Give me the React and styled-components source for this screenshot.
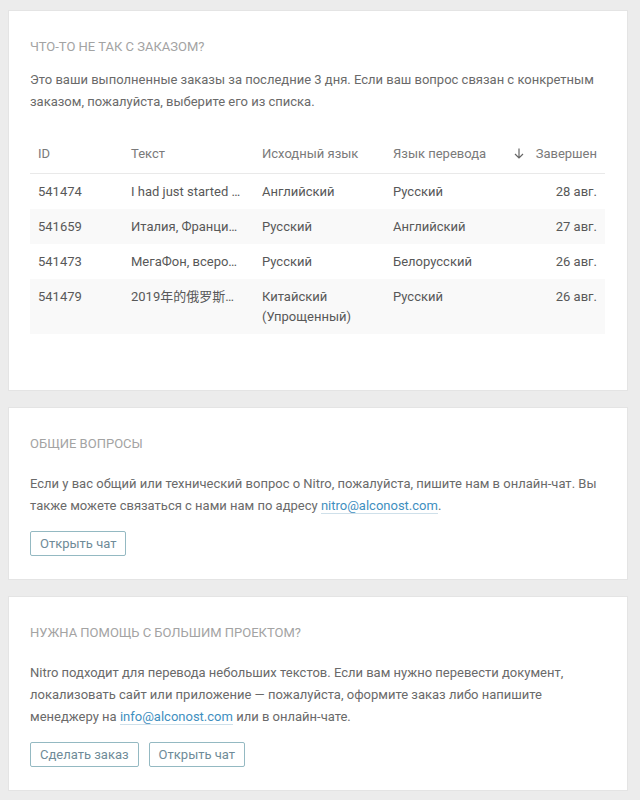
import React from "react"
import styled, { createGlobalStyle } from "styled-components"

const GlobalStyle = createGlobalStyle`
  body {
    margin: 0;
    background: #ececec;
    font-family: Roboto, "Noto Sans CJK SC", "Liberation Sans", sans-serif;
    -webkit-font-smoothing: antialiased;
  }
`

const Page = styled.div`
  display: flex;
  flex-direction: column;
  gap: 16px;
  padding: 10px 12px 10px 8px;
`

const Card = styled.section`
  background: #fff;
  border: 1px solid #e4e4e4;
  padding: 28px 22px 23px 21px;
`

const Title = styled.h3`
  margin: 0 0 ${({ $tight }) => ($tight ? "14px" : "21px")};
  font-size: 13px;
  line-height: 16px;
  font-weight: 400;
  text-transform: uppercase;
  color: #a3a3a3;
`

const Text = styled.p`
  margin: 0;
  font-size: 13px;
  line-height: 22px;
  color: #6a6a6a;
`

const Link = styled.a`
  color: #3f8fbf;
  text-decoration: none;
  border-bottom: 1px solid #cfe0ea;
`

const Buttons = styled.div`
  display: flex;
  gap: 10px;
  margin-top: 14px;
`

const Button = styled.button`
  height: 25px;
  padding: 0 9px;
  background: #fff;
  border: 1px solid #94b9c2;
  border-radius: 2px;
  font-family: inherit;
  font-size: 13px;
  color: #6f8b98;
  cursor: pointer;
`

const Table = styled.table`
  width: 575px;
  margin: 20px 0 33px;
  border-collapse: collapse;
  table-layout: fixed;
  font-size: 13px;
`

const Th = styled.th`
  height: 40px;
  padding: 0 8px;
  text-align: ${({ $right }) => ($right ? "right" : "left")};
  font-weight: 400;
  color: #7a7a7a;
  border-bottom: 1px solid #e9e9e9;
  white-space: nowrap;
`

const Row = styled.tr`
  &:nth-child(even) {
    background: #f9f9f9;
  }
`

const Td = styled.td`
  padding: 8px 8px 7px;
  line-height: 20px;
  vertical-align: top;
  color: #585858;
  text-align: ${({ $right }) => ($right ? "right" : "left")};
  ${({ $clip }) =>
    $clip &&
    `
    padding-right: 12px;
    white-space: nowrap;
    overflow: hidden;
    text-overflow: ellipsis;
  `}
`

const SortIcon = styled.svg`
  width: 10px;
  height: 11px;
  margin-right: 12px;
  vertical-align: -1px;
`

const ORDERS = [
  { id: "541474", text: "I had just started  to learn Russian", from: "Английский", to: "Русский", date: "28 авг." },
  { id: "541659", text: "Италия, Франция, Испания", from: "Русский", to: "Английский", date: "27 авг." },
  { id: "541473", text: "МегаФон, всероссийский оператор", from: "Русский", to: "Белорусский", date: "26 авг." },
  { id: "541479", text: "2019年的俄罗斯联邦", from: "Китайский (Упрощенный)", to: "Русский", date: "26 авг." },
]

const App = () => (
  <Page>
    <GlobalStyle />
    <Card>
      <Title $tight>Что-то не так с заказом?</Title>
      <Text>
        Это ваши выполненные заказы за последние 3 дня. Если ваш вопрос связан с конкретным
        заказом, пожалуйста, выберите его из списка.
      </Text>
      <Table>
        <colgroup>
          <col style={{ width: 93 }} />
          <col style={{ width: 131 }} />
          <col style={{ width: 131 }} />
          <col style={{ width: 115 }} />
          <col style={{ width: 105 }} />
        </colgroup>
        <thead>
          <tr>
            <Th>ID</Th>
            <Th>Текст</Th>
            <Th>Исходный язык</Th>
            <Th>Язык перевода</Th>
            <Th $right>
              <SortIcon viewBox="0 0 10 11" fill="none" stroke="#666" strokeWidth="1.2">
                <path d="M5 0.5v9.5M1 6l4 4 4-4" />
              </SortIcon>
              Завершен
            </Th>
          </tr>
        </thead>
        <tbody>
          {ORDERS.map(item => (
            <Row key={item.id}>
              <Td>{item.id}</Td>
              <Td $clip>{item.text}</Td>
              <Td>{item.from}</Td>
              <Td>{item.to}</Td>
              <Td $right>{item.date}</Td>
            </Row>
          ))}
        </tbody>
      </Table>
    </Card>

    <Card>
      <Title>Общие вопросы</Title>
      <Text>
        Если у вас общий или технический вопрос о Nitro, пожалуйста, пишите нам в онлайн-чат. Вы
        также можете связаться с нами нам по адресу{" "}
        <Link href="mailto:nitro@alconost.com">nitro@alconost.com</Link>.
      </Text>
      <Buttons>
        <Button>Открыть чат</Button>
      </Buttons>
    </Card>

    <Card>
      <Title>Нужна помощь с большим проектом?</Title>
      <Text>
        Nitro подходит для перевода небольших текстов. Если вам нужно перевести документ,
        локализовать сайт или приложение — пожалуйста, оформите заказ либо напишите
        менеджеру на <Link href="mailto:info@alconost.com">info@alconost.com</Link> или в онлайн-чате.
      </Text>
      <Buttons>
        <Button>Сделать заказ</Button>
        <Button>Открыть чат</Button>
      </Buttons>
    </Card>
  </Page>
)

export default App
